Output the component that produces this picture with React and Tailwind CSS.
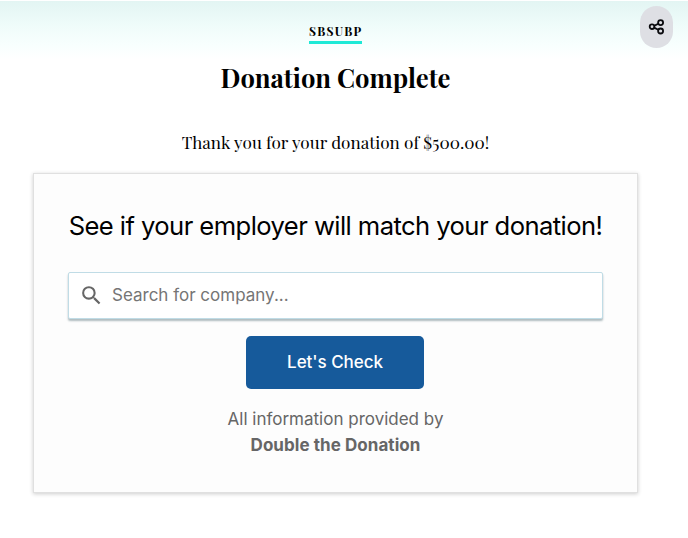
import { MdSearch } from "react-icons/md"

function ShareIcon() {
  return (
    <svg width="18" height="18" viewBox="0 0 18 18" fill="none" stroke="#0b0b0f" strokeWidth="1.8">
      <circle cx="4" cy="8.7" r="2.3" />
      <circle cx="12.6" cy="4.6" r="2.5" />
      <circle cx="12.6" cy="13" r="2.5" />
      <path d="M6.1 7.9l4.2-2.1M6.1 9.6l4.2 2.2" />
    </svg>
  )
}

export default function App() {
  return (
    <div className="relative h-[538px] w-[688px] overflow-hidden bg-white pt-px">
      {/* HEADER */}
      <div className="h-[172px] bg-[linear-gradient(to_bottom,#e3f5f3_0px,#effcfa_24px,#f8fffe_44px,#ffffff_58px)] font-['Playfair_Display','Liberation_Serif',serif] text-black">
        <div className="flex w-[671px] flex-col items-center">
          <div className="mt-[22px] h-[21px] w-[53px] border-b-[3px] border-[#1de9d6] text-[12px] leading-[17px] font-bold tracking-[1.2px] whitespace-nowrap">
            SBSUBP
          </div>
          <h1 className="mt-[16px] text-[25.6px] leading-[34px] font-bold">
            Donation Complete
          </h1>
          <p className="mt-[36px] text-[17.1px] leading-[24px] whitespace-nowrap">
            Thank you for your donation of $500.00!
          </p>
        </div>
      </div>

      {/* MATCHING GIFT CARD */}
      <div className="ml-[33px] flex h-[320px] w-[605px] flex-col items-center border border-[#e0e0e0] bg-[#fdfdfd] px-[34px] pt-[34px] font-['Inter',sans-serif] shadow-[0_1px_4px_rgba(0,0,0,0.2)]">
        <h2 className="text-[25.6px] leading-[36px] tracking-[-0.57px] whitespace-nowrap text-black">
          See if your employer will match your donation!
        </h2>
        <div className="mt-[28px] flex h-[47px] w-full items-center rounded-[2px] border border-[#c0dce6] bg-white pl-[10px] shadow-[0_2px_2px_rgba(60,90,100,0.4)]">
          <MdSearch className="size-[25px] text-[#666]" />
          <span className="ml-[8px] pb-px text-[17px] leading-[24px] text-[#757575]">Search for company...</span>
        </div>
        <button className="mt-[17px] mr-px h-[53px] w-[178px] shrink-0 rounded-[5px] bg-[#165a9b] text-[17px] font-medium tracking-[-0.05px] text-white">
          Let's Check
        </button>
        <p className="mt-[17px] text-center text-[17px] leading-[26px] text-[#666]">
          All information provided by
          <br />
          <span className="font-bold tracking-[0.06px]">Double the Donation</span>
        </p>
      </div>

      {/* SHARE BUTTON */}
      <button className="absolute top-[6px] left-[640px] flex h-[42px] w-[33px] items-center justify-center rounded-full bg-[#dedfe4]">
        <ShareIcon />
      </button>
    </div>
  )
}
